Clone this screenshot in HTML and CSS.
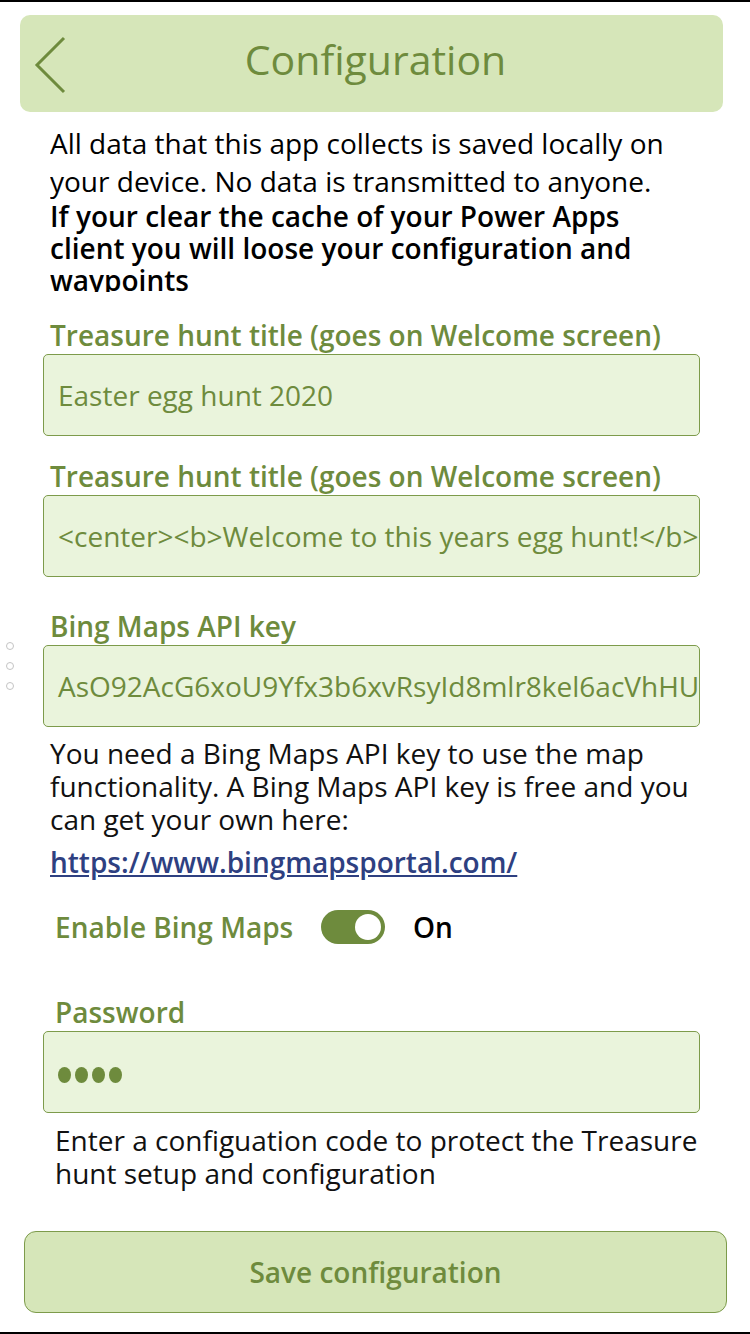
FILE: index.html
```html
<!DOCTYPE html>
<html>
<head>
<meta charset="utf-8">
<link rel="stylesheet" href="styles.css">
</head>
<body>
<div class="screen">
  <header class="header">
    <svg class="back" width="34" height="60" viewBox="0 0 34 60"><polyline points="30,2 3,29 30,56" fill="none" stroke="#6e8b3d" stroke-width="3"/></svg>
    <h1 class="title">Configuration</h1>
  </header>

  <div class="intro">
    <p class="intro-normal">All data that this app collects is saved locally on your device. No data is transmitted to anyone.</p>
    <p class="intro-bold">If your clear the cache of your Power Apps client you will loose your configuration and waypoints</p>
  </div>

  <div class="field field-first">
    <div class="label">Treasure hunt title (goes on Welcome screen)</div>
    <div class="input"><span>Easter egg hunt 2020</span></div>
  </div>

  <div class="field field-second">
    <div class="label">Treasure hunt title (goes on Welcome screen)</div>
    <div class="input"><span>&lt;center&gt;&lt;b&gt;Welcome to this years egg hunt!&lt;/b&gt;&lt;/center&gt;</span></div>
  </div>

  <div class="field field-key">
    <div class="handles"><i></i><i></i><i></i></div>
    <div class="label">Bing Maps API key</div>
    <div class="input"><span>AsO92AcG6xoU9Yfx3b6xvRsyId8mlr8kel6acVhHUq2kPz</span></div>
  </div>

  <p class="help">You need a Bing Maps API key to use the map functionality. A Bing Maps API key is free and you can get your own here:</p>
  <a class="link" href="#">https://www.bingmapsportal.com/</a>

  <div class="toggle-row">
    <span class="toggle-label">Enable Bing Maps</span>
    <span class="toggle"><span class="knob"></span></span>
    <span class="toggle-state">On</span>
  </div>

  <div class="field field-pw">
    <div class="label">Password</div>
    <div class="input"><span class="dots"><i></i><i></i><i></i><i></i></span></div>
  </div>

  <p class="help help-pw">Enter a configuation code to protect the Treasure hunt setup and configuration</p>

  <div class="save">Save configuration</div>
</div>
</body>
</html>
```

FILE: styles.css
```css
html, body {
  margin: 0;
  padding: 0;
  background: #fff;
}
.screen {
  width: 750px;
  height: 1334px;
  box-sizing: border-box;
  border-top: 2px solid #000;
  border-bottom: 2px solid #000;
  font-family: "Open Sans", "Liberation Sans", sans-serif;
  display: flex;
  flex-direction: column;
  position: relative;
  overflow: hidden;
}
.header {
  margin: 13px 0 0 20px;
  width: 703px;
  height: 97px;
  box-sizing: border-box;
  padding-bottom: 10px;
  background: #d6e6b9;
  border-radius: 10px;
  display: flex;
  align-items: center;
  justify-content: center;
  position: relative;
}
.back {
  position: absolute;
  left: 14px;
  top: 21px;
}
.title {
  margin: 0 0 0 8px;
  font-weight: 400;
  font-size: 41px;
  color: #6e8b3d;
}
.intro {
  margin: 12px 0 0 50px;
  width: 640px;
  height: 168px;
  overflow: hidden;
  color: #000;
}
.intro p { margin: 0; }
.intro-normal {
  font-size: 28px;
  line-height: 38px;
}
.intro-bold {
  font-size: 28px;
  font-weight: 600;
  line-height: 32px;
}
.field {
  display: flex;
  flex-direction: column;
  position: relative;
}
.label {
  margin-left: 50px;
  font-size: 28px;
  font-weight: 600;
  color: #6e8b3d;
  line-height: 34px;
}
.input {
  margin: 2px 0 0 43px;
  width: 657px;
  height: 82px;
  box-sizing: border-box;
  background: #eaf4dc;
  border: 1px solid #7d9b4b;
  border-radius: 5px;
  display: flex;
  align-items: center;
  padding: 0 14px;
  overflow: hidden;
  white-space: nowrap;
  font-size: 28px;
  color: #6e8b3d;
}
.field-first { margin-top: 26px; }
.field-second { margin-top: 23px; }
.field-key { margin-top: 32px; }
.handles {
  position: absolute;
  left: 6px;
  top: 33px;
  display: flex;
  flex-direction: column;
  gap: 12px;
}
.handles i {
  display: block;
  width: 8px;
  height: 8px;
  border: 1.5px solid #c4c4c4;
  border-radius: 50%;
  box-sizing: border-box;
}
.help {
  margin: 10px 0 0 50px;
  width: 670px;
  font-size: 28px;
  line-height: 33px;
  color: #111;
}
.link {
  margin: 8px 0 0 50px;
  font-size: 28px;
  font-weight: 600;
  color: #2e4081;
  text-decoration: underline;
  line-height: 36px;
  align-self: flex-start;
}
.toggle-row {
  margin: 27px 0 0 55px;
  display: flex;
  align-items: center;
  height: 40px;
}
.toggle-label {
  font-size: 28px;
  font-weight: 600;
  color: #6e8b3d;
  width: 266px;
}
.toggle {
  width: 64px;
  height: 34px;
  border-radius: 17px;
  background: #6e8b3d;
  position: relative;
  display: block;
}
.knob {
  position: absolute;
  right: 4px;
  top: 4px;
  width: 26px;
  height: 26px;
  border-radius: 50%;
  background: #fff;
}
.toggle-state {
  margin-left: 28px;
  font-size: 28px;
  font-weight: 600;
  color: #000;
}
.field-pw { margin-top: 48px; }
.field-pw .label { margin-left: 55px; }
.dots {
  display: flex;
  gap: 4px;
  padding-top: 6px;
}
.dots i {
  display: block;
  width: 13px;
  height: 16px;
  border-radius: 50%;
  background: #6e8b3d;
}
.help-pw {
  margin: 11px 0 0 55px;
  width: 660px;
}
.save {
  margin: 41px 0 0 24px;
  width: 703px;
  height: 82px;
  box-sizing: border-box;
  background: #d6e6b9;
  border: 1px solid #7d9b4b;
  border-radius: 12px;
  display: flex;
  align-items: center;
  justify-content: center;
  font-size: 28px;
  font-weight: 600;
  color: #6e8b3d;
}
```
